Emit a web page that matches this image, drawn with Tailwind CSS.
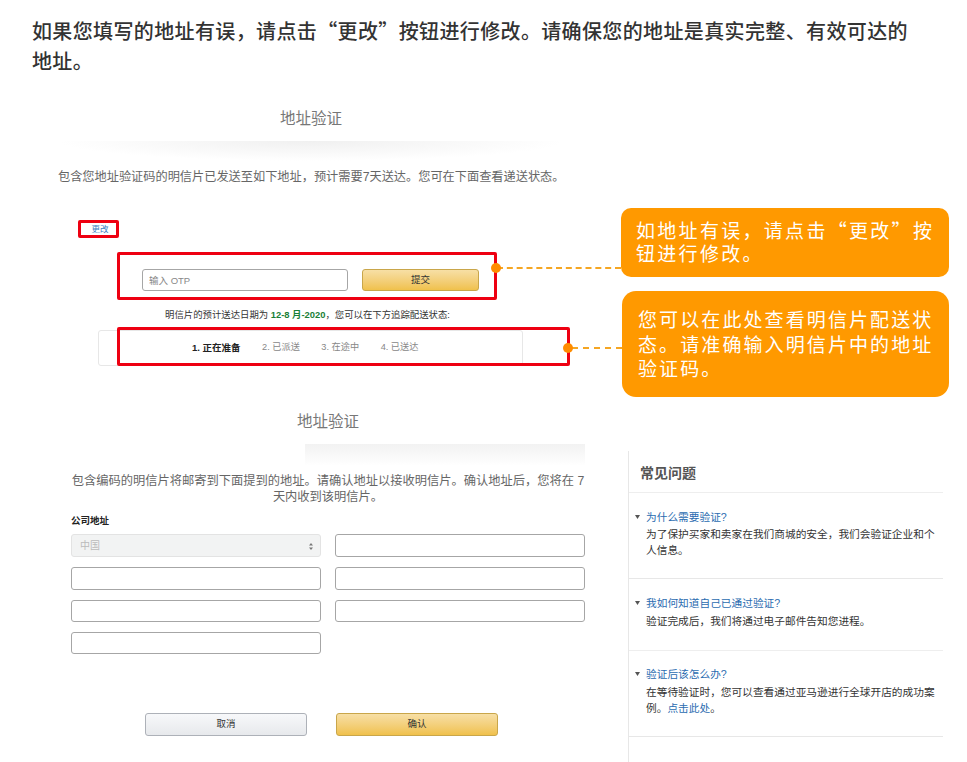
<!DOCTYPE html>
<html lang="zh-CN">
<head>
    <meta charset="UTF-8">
    <meta name="viewport" content="width=device-width, initial-scale=1.0">
    <title>地址验证</title>
    <script src="https://cdn.jsdelivr.net/npm/@tailwindcss/browser@4"></script>
</head>
<body class="bg-white font-['Liberation_Sans','Noto_Sans_CJK_SC',sans-serif]">
    <div class="relative w-[967px] h-[762px] overflow-hidden">
        <!-- Intro -->
        <p class="w-[890px] ml-[32px] pt-[16px] font-['Noto_Sans_CJK_SC',sans-serif] text-[20px] leading-[30px] tracking-[0.37px] font-medium text-[#333]">如果您填写的地址有误&#xFF0C;请点击“更改”按钮进行修改。请确保您的地址是真实完整、有效可达的地址。</p>

        <!-- Postcard status -->
        <section class="mt-[32px] ml-[56px] w-[520px]">
            <h2 class="w-[510px] text-center text-[15.5px] leading-[22px] text-[#777]">地址验证</h2>
            <div class="w-[510px] h-[20px] mt-[11px] bg-[radial-gradient(ellipse_at_top,#f0f0f0,#ffffff_70%)]"></div>
            <p class="ml-[2px] mt-[7px] text-[12.2px] leading-[18px] text-[#666] whitespace-nowrap">包含您地址验证码的明信片已发送至如下地址&#xFF0C;预计需要7天送达。您可在下面查看递送状态。</p>

            <div class="ml-[22px] mt-[34px] w-[41px] h-[18px] pl-[3px] border-[3px] border-[#ee0011] rounded-[2px] flex items-center justify-center">
                <a href="#" class="text-[8.5px] leading-none text-[#3a7cc1]">更改</a>
            </div>

            <div class="ml-[61px] mt-[14px] w-[380px] h-[48px] pt-[14px] pl-[22px] border-[3px] border-[#ee0011] rounded-[2px] flex gap-[14px]">
                <input placeholder="输入 OTP" class="w-[206px] h-[22px] px-[6px] text-[9.5px] bg-white border border-[#a6a6a6] rounded-[3px] placeholder:text-[#888]">
                <button class="w-[117px] h-[22px] text-[9.5px] text-[#333] bg-gradient-to-b from-[#f7dfa5] to-[#f0c14b] border border-[#c9a64a] rounded-[3px]">提交</button>
            </div>

            <p class="ml-[109px] mt-[8px] text-[9.4px] leading-[14px] text-[#333] whitespace-nowrap">明信片的预计送达日期为 <b class="text-[#1a7f37]">12-8 月-2020</b>&#xFF0C;您可以在下方追踪配送状态:</p>

            <div class="relative ml-[42px] mt-[8px] w-[425px] h-[36px] border border-[#e7e7e7] rounded-[3px] pl-[93px] flex items-center gap-[21.5px] text-[9.2px] text-[#888]">
                <span class="text-[9.5px] font-bold text-[#222]">1. 正在准备</span>
                <span>2. 已派送</span>
                <span>3. 在途中</span>
                <span>4. 已送达</span>
                <div class="absolute left-[18px] top-[-4px] w-[453px] h-[39px] border-[3px] border-[#ee0011] rounded-[2px]"></div>
            </div>
        </section>

        <!-- Callouts -->
        <div class="absolute left-[497px] top-[267px] w-[124px] border-t-2 border-dashed border-[#f5a623]"></div>
        <div class="absolute left-[491px] top-[263px] w-[10px] h-[10px] rounded-full bg-[#ff8c00]"></div>
        <div class="absolute left-[572px] top-[347px] w-[50px] border-t-2 border-dashed border-[#f5a623]"></div>
        <div class="absolute left-[563px] top-[343px] w-[10px] h-[10px] rounded-full bg-[#ff8c00]"></div>
        <div class="absolute left-[621px] top-[208px] w-[328px] h-[69px] pl-[15px] pr-[8px] pt-[10px] bg-[#ff9900] rounded-[10px] text-white font-['Noto_Sans_CJK_SC',sans-serif] text-[19px] leading-[23px] tracking-[2.3px]">如地址有误&#xFF0C;请点击“更改”按钮进行修改。</div>
        <div class="absolute left-[622px] top-[291px] w-[327px] h-[106px] pl-[16px] pr-[14px] pt-[16px] bg-[#ff9900] rounded-[14px] text-white font-['Noto_Sans_CJK_SC',sans-serif] text-[19px] leading-[24.5px] tracking-[2.1px]">您可以在此处查看明信片配送状态。请准确输入明信片中的地址验证码。</div>

        <!-- Bottom half -->
        <div class="mt-[45px] flex items-start">
            <section class="w-[628px] pl-[71px] pr-[43px]">
                <h2 class="text-center text-[15.5px] leading-[22px] text-[#777]">地址验证</h2>
                <div class="h-[22px] mt-[11px] ml-[234px] w-[280px] bg-gradient-to-b from-[#f2f2f2] to-white"></div>
                <p class="mt-[7px] text-center text-[12.25px] leading-[16px] text-[#666]">包含编码的明信片将邮寄到下面提到的地址。请确认地址以接收明信片。确认地址后&#xFF0C;您将在 7 天内收到该明信片。</p>
                <div class="mt-[9px] text-[9.5px] leading-[14px] font-bold text-[#222]">公司地址</div>

                <div class="mt-[6px] grid grid-cols-2 gap-x-[14px] gap-y-[10px]">
                    <div class="relative h-[23px] bg-[#f2f3f3] border border-[#e3e3e3] rounded-[3px] pl-[8px] flex items-center text-[10px] text-[#bbb]">
                        <span>中国</span>
                        <svg class="absolute right-[7px] top-[8px]" width="4" height="7" viewBox="0 0 4 7"><path d="M2 0 4 2.5H0ZM2 7 0 4.5H4Z" fill="#777"/></svg>
                    </div>
                    <input class="h-[23px] bg-white border border-[#a6a6a6] rounded-[3px]">
                    <input class="h-[23px] bg-white border border-[#a6a6a6] rounded-[3px]">
                    <input class="h-[23px] bg-white border border-[#a6a6a6] rounded-[3px]">
                    <input class="h-[22px] bg-white border border-[#a6a6a6] rounded-[3px]">
                    <input class="h-[22px] bg-white border border-[#a6a6a6] rounded-[3px]">
                    <input class="h-[22px] bg-white border border-[#a6a6a6] rounded-[3px]">
                </div>

                <div class="mt-[59px] ml-[74px] flex gap-[29px]">
                    <button class="w-[162px] h-[23px] text-[9.5px] text-[#333] bg-gradient-to-b from-[#f7f8fa] to-[#e7e9ec] border border-[#adb1b8] rounded-[3px]">取消</button>
                    <button class="w-[162px] h-[23px] text-[9.5px] text-[#333] bg-gradient-to-b from-[#f7dfa5] to-[#f0c14b] border border-[#c9a64a] rounded-[3px]">确认</button>
                </div>
            </section>

            <aside class="mt-[40px] w-[315px] h-[312px] border-l border-[#e7e7e7]">
                <h3 class="h-[42px] pl-[11px] pt-[12px] text-[14px] leading-[20px] font-bold text-[#555] border-b border-[#eeeeee]">常见问题</h3>

                <div class="h-[86px] pt-[16px] border-b border-[#e7e7e7]">
                    <a href="#" class="flex items-center gap-[6px] pl-[6px] text-[10.7px] leading-[16px] text-[#2b6cb0]"><svg width="5" height="4" viewBox="0 0 5 4"><path d="M0 0H5L2.5 4Z" fill="#555"/></svg>为什么需要验证?</a>
                    <p class="pl-[17px] mt-[1px] text-[10.7px] leading-[16px] text-[#333]">为了保护买家和卖家在我们商城的安全&#xFF0C;我们会验证企业和个人信息。</p>
                </div>
                <div class="h-[72px] pt-[16px] border-b border-[#eeeeee]">
                    <a href="#" class="flex items-center gap-[6px] pl-[6px] text-[10.7px] leading-[16px] text-[#2b6cb0]"><svg width="5" height="4" viewBox="0 0 5 4"><path d="M0 0H5L2.5 4Z" fill="#555"/></svg>我如何知道自己已通过验证?</a>
                    <p class="pl-[17px] mt-[2px] text-[10.7px] leading-[16px] text-[#333]">验证完成后&#xFF0C;我们将通过电子邮件告知您进程。</p>
                </div>
                <div class="h-[86px] pt-[15px] border-b border-[#e7e7e7]">
                    <a href="#" class="flex items-center gap-[6px] pl-[6px] text-[10.7px] leading-[16px] text-[#2b6cb0]"><svg width="5" height="4" viewBox="0 0 5 4"><path d="M0 0H5L2.5 4Z" fill="#555"/></svg>验证后该怎么办?</a>
                    <p class="pl-[17px] mt-[2px] text-[10.7px] leading-[16px] text-[#333]">在等待验证时&#xFF0C;您可以查看通过亚马逊进行全球开店的成功案例。<a href="#" class="text-[#2b6cb0]">点击此处</a>。</p>
                </div>
            </aside>
        </div>
    </div>
</body>
</html>
